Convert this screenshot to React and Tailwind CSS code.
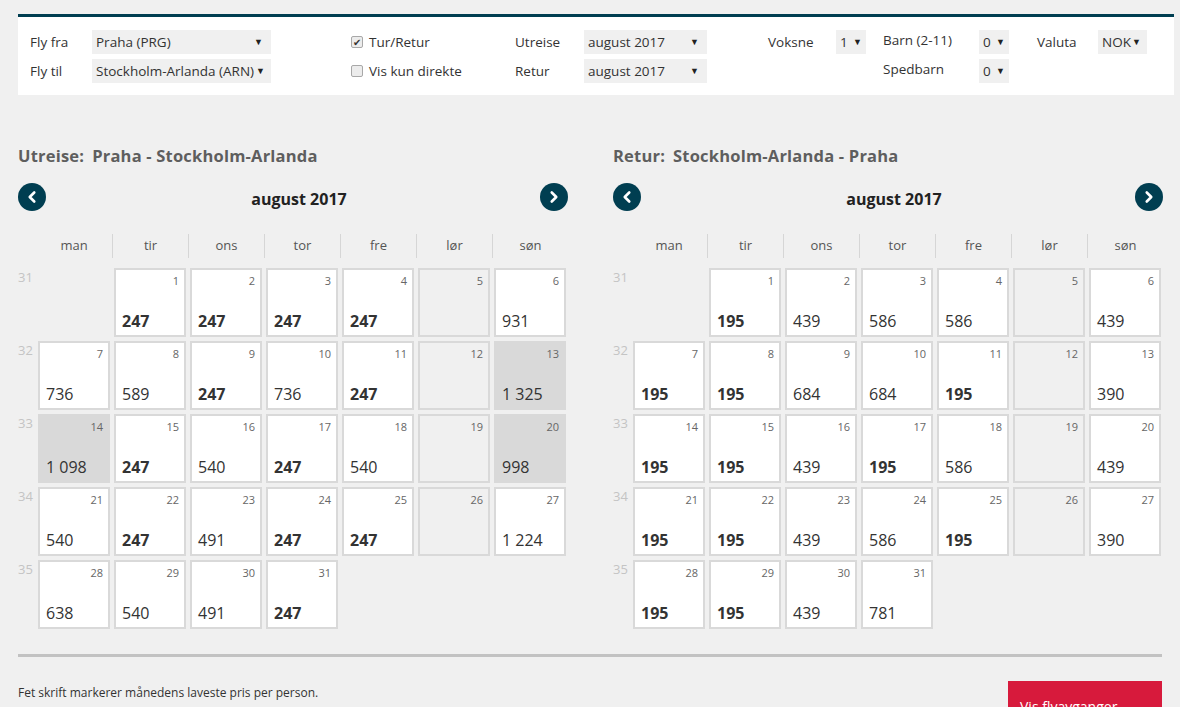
import React from 'react';
import { ChevronLeft, ChevronRight } from 'lucide-react';

const outbound = [
  [31, [null, ['1', '247', 'b'], ['2', '247', 'b'], ['3', '247', 'b'], ['4', '247', 'b'], ['5', '', 'e'], ['6', '931', '']]],
  [32, [['7', '736', ''], ['8', '589', ''], ['9', '247', 'b'], ['10', '736', ''], ['11', '247', 'b'], ['12', '', 'e'], ['13', '1 325', 'g']]],
  [33, [['14', '1 098', 'g'], ['15', '247', 'b'], ['16', '540', ''], ['17', '247', 'b'], ['18', '540', ''], ['19', '', 'e'], ['20', '998', 'g']]],
  [34, [['21', '540', ''], ['22', '247', 'b'], ['23', '491', ''], ['24', '247', 'b'], ['25', '247', 'b'], ['26', '', 'e'], ['27', '1 224', '']]],
  [35, [['28', '638', ''], ['29', '540', ''], ['30', '491', ''], ['31', '247', 'b'], null, null, null]],
];

const inbound = [
  [31, [null, ['1', '195', 'b'], ['2', '439', ''], ['3', '586', ''], ['4', '586', ''], ['5', '', 'e'], ['6', '439', '']]],
  [32, [['7', '195', 'b'], ['8', '195', 'b'], ['9', '684', ''], ['10', '684', ''], ['11', '195', 'b'], ['12', '', 'e'], ['13', '390', '']]],
  [33, [['14', '195', 'b'], ['15', '195', 'b'], ['16', '439', ''], ['17', '195', 'b'], ['18', '586', ''], ['19', '', 'e'], ['20', '439', '']]],
  [34, [['21', '195', 'b'], ['22', '195', 'b'], ['23', '439', ''], ['24', '586', ''], ['25', '195', 'b'], ['26', '', 'e'], ['27', '390', '']]],
  [35, [['28', '195', 'b'], ['29', '195', 'b'], ['30', '439', ''], ['31', '781', ''], null, null, null]],
];

const days = ['man', 'tir', 'ons', 'tor', 'fre', 'lør', 'søn'];

const Select = ({ value, className }) => (
  <div className={`flex h-6 items-center justify-between bg-[#f0f0f0] pl-1 pr-2 text-[13.5px] text-[#333] ${className}`}>
    <span>{value}</span>
    <span className="text-[9px] text-[#222]">▼</span>
  </div>
);

const Check = ({ checked, label }) => (
  <div className="flex h-6 items-center gap-1.5 text-[13.5px] text-[#333]">
    <span className="flex h-[12px] w-[12px] items-center justify-center rounded-[2px] border border-[#a8a8a8] bg-[#ececec] text-[10px] leading-none text-[#333]">
      {checked ? '✔' : ''}
    </span>
    {label}
  </div>
);

const Cell = ({ cell }) => {
  if (!cell) return <div className="h-[69px] w-[72px]" />;
  const [day, price, kind] = cell;
  const bg =
    kind === 'g' ? 'bg-[#d9d9d9]' : kind === 'e' ? 'bg-[#f0f0f0]' : 'bg-white';
  return (
    <div className={`relative h-[69px] w-[72px] border-2 border-[#d9d9d9] ${bg}`}>
      <span className="absolute right-[5px] top-[3px] text-[11px] text-[#666]">{day}</span>
      <span
        className={`absolute bottom-[2px] left-[6px] text-[16px] text-[#333] ${
          kind === 'b' ? 'font-bold' : ''
        }`}
      >
        {price}
      </span>
    </div>
  );
};

const Calendar = ({ title, route, weeks }) => (
  <div className="w-[550px]">
    <div className="flex h-[20px] items-center text-[16.5px] font-bold tracking-[0.2px] text-[#5e5e5e]">
      <span>{title}:</span>
      <span className="ml-2">{route}</span>
    </div>
    <div className="mt-[17px] flex h-[28px] items-center justify-between">
      <button className="flex h-7 w-7 items-center justify-center rounded-full bg-[#003e51] text-white">
        <ChevronLeft size={18} strokeWidth={3.5} />
      </button>
      <span className="ml-[12px] mt-[3px] text-[16px] font-bold text-[#222]">august 2017</span>
      <button className="flex h-7 w-7 items-center justify-center rounded-full bg-[#003e51] text-white">
        <ChevronRight size={18} strokeWidth={3.5} />
      </button>
    </div>
    <div className="mt-[23px] flex pl-[18px]">
      {days.map((d, i) => (
        <div
          key={d}
          className={`flex h-[24px] w-[76px] items-center justify-center text-[13px] text-[#555] ${
            i > 0 ? 'border-l border-[#d6d6d6]' : ''
          }`}
        >
          {d}
        </div>
      ))}
    </div>
    <div className="mt-[10px] flex flex-col gap-[4px]">
      {weeks.map(([wk, cells]) => (
        <div key={wk} className="flex">
          <div className="w-[18px] text-[13px] text-[#c4c4c4]">{wk}</div>
          {cells.map((c, i) => (
            <div key={i} className="flex w-[76px] justify-center">
              <Cell cell={c} />
            </div>
          ))}
        </div>
      ))}
    </div>
  </div>
);

export default function App() {
  return (
    <div className="min-h-[707px] overflow-hidden bg-[#f0f0f0] pt-[14px] font-['Open_Sans',sans-serif]">
      {/* Search panel */}
      <div className="ml-[18px] w-[1156px] border-t-[3px] border-[#003e51] bg-white pb-[12px] pl-[12px] pt-[13px]">
        <div className="flex">
          <div className="flex w-[321px] flex-col gap-[5px]">
            <div className="flex items-center">
              <span className="w-[62px] text-[13.5px] text-[#333]">Fly fra</span>
              <Select value="Praha (PRG)" className="w-[179px]" />
            </div>
            <div className="flex items-center">
              <span className="w-[62px] text-[13.5px] text-[#333]">Fly til</span>
              <Select value="Stockholm-Arlanda (ARN)" className="w-[179px] !pr-1.5" />
            </div>
          </div>
          <div className="flex w-[164px] flex-col gap-[5px]">
            <Check checked label="Tur/Retur" />
            <Check label="Vis kun direkte" />
          </div>
          <div className="flex w-[253px] flex-col gap-[5px]">
            <div className="flex items-center">
              <span className="w-[69px] text-[13.5px] text-[#333]">Utreise</span>
              <Select value="august 2017" className="w-[123px]" />
            </div>
            <div className="flex items-center">
              <span className="w-[69px] text-[13.5px] text-[#333]">Retur</span>
              <Select value="august 2017" className="w-[123px]" />
            </div>
          </div>
          <div className="flex w-[115px] items-start">
            <span className="flex h-6 w-[68px] items-center text-[13.5px] text-[#333]">Voksne</span>
            <Select value="1" className="w-[30px] !pr-1" />
          </div>
          <div className="flex w-[154px] flex-col gap-[5px]">
            <div className="flex items-center">
              <span className="-mt-1 w-[96px] text-[13.5px] text-[#333]">Barn (2-11)</span>
              <Select value="0" className="w-[30px] !pr-1" />
            </div>
            <div className="flex items-center">
              <span className="-mt-1 w-[96px] text-[13.5px] text-[#333]">Spedbarn</span>
              <Select value="0" className="w-[30px] !pr-1" />
            </div>
          </div>
          <div className="flex items-start">
            <span className="flex h-6 w-[61px] items-center text-[13.5px] text-[#333]">Valuta</span>
            <Select value="NOK" className="w-[49px] !pr-1.5" />
          </div>
        </div>
      </div>

      {/* Calendars */}
      <div className="ml-[18px] mt-[51px] flex w-[1145px] justify-between">
        <Calendar title="Utreise" route="Praha - Stockholm-Arlanda" weeks={outbound} />
        <Calendar title="Retur" route="Stockholm-Arlanda - Praha" weeks={inbound} />
      </div>

      {/* Footer */}
      <div className="ml-[18px] mt-[25px] h-[3px] w-[1144px] bg-[#c2c2c2]" />
      <div className="ml-[18px] mt-[24px] flex w-[1144px] items-start justify-between">
        <p className="mt-[3px] text-[12px] text-[#333]">
          Fet skrift markerer månedens laveste pris per person.
        </p>
        <button className="h-[40px] w-[154px] bg-[#d71a3c] pl-[12px] pt-[12px] text-left text-[14px] leading-none text-white">
          Vis flyavganger
        </button>
      </div>
    </div>
  );
}
